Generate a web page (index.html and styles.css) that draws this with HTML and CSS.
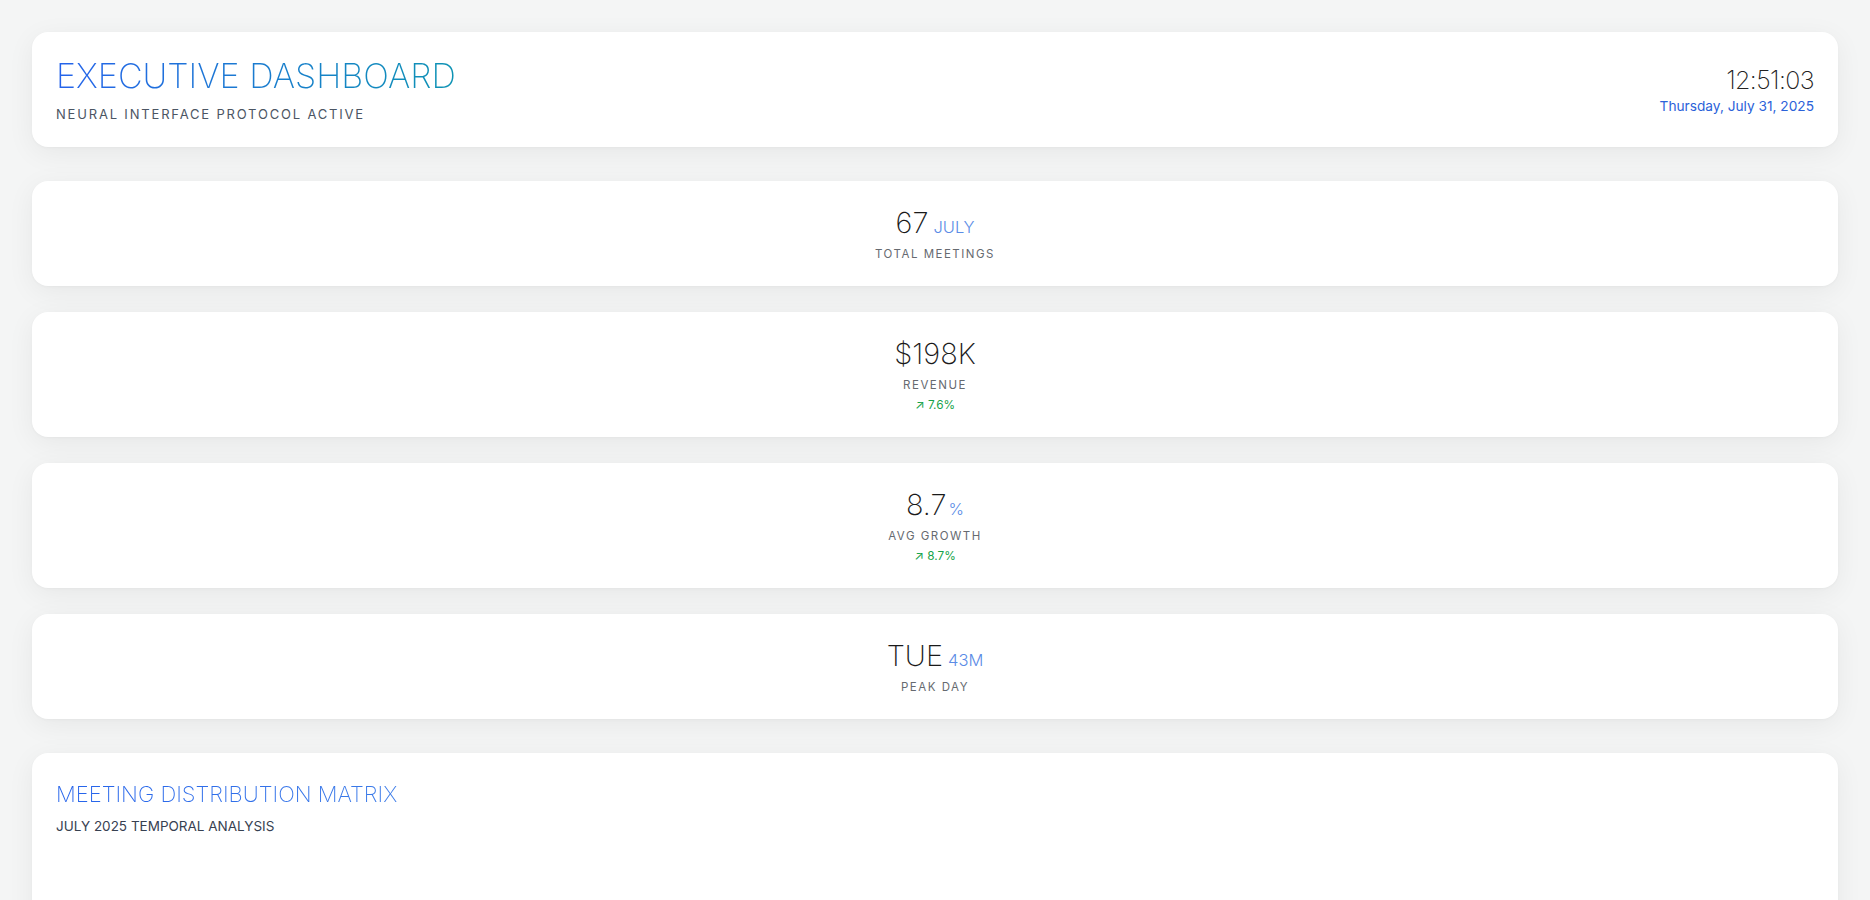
FILE: index.html
```html
<!DOCTYPE html>
<html lang="en">
<head>
<meta charset="utf-8">
<title>Executive Dashboard</title>
<link rel="stylesheet" href="styles.css">
</head>
<body>
<div class="page">
  <header class="card header">
    <div class="header-left">
      <h1 class="title">EXECUTIVE DASHBOARD</h1>
      <p class="subtitle">NEURAL INTERFACE PROTOCOL ACTIVE</p>
    </div>
    <div class="header-right">
      <div class="clock">12:51:03</div>
      <div class="date">Thursday, July 31, 2025</div>
    </div>
  </header>

  <section class="stats">
    <div class="card stat">
      <div class="stat-value">67<span class="unit">JULY</span></div>
      <div class="stat-label">TOTAL MEETINGS</div>
    </div>
    <div class="card stat">
      <div class="stat-value">$198K</div>
      <div class="stat-label">REVENUE</div>
      <div class="stat-change"><span class="arrow">↗</span> 7.6%</div>
    </div>
    <div class="card stat">
      <div class="stat-value">8.7<span class="unit unit-tight">%</span></div>
      <div class="stat-label">AVG GROWTH</div>
      <div class="stat-change"><span class="arrow">↗</span> 8.7%</div>
    </div>
    <div class="card stat">
      <div class="stat-value">TUE<span class="unit">43M</span></div>
      <div class="stat-label">PEAK DAY</div>
    </div>
  </section>

  <section class="card matrix">
    <h2 class="matrix-title">MEETING DISTRIBUTION MATRIX</h2>
    <p class="matrix-sub">JULY 2025 TEMPORAL ANALYSIS</p>
    <div class="matrix-body"></div>
  </section>
</div>
</body>
</html>
```

FILE: styles.css
```css
* { box-sizing: border-box; }
html, body { margin: 0; padding: 0; }
body {
  font-family: "Inter", "Noto Sans", "Liberation Sans", sans-serif;
  background: #f4f5f5;
  color: #1f2937;
}
.page {
  padding: 32px;
  display: flex;
  flex-direction: column;
}
.card {
  background: #ffffff;
  border-radius: 16px;
  box-shadow: 0 6px 28px rgba(0, 0, 0, 0.06), 0 1px 3px rgba(0, 0, 0, 0.03);
}
.header {
  display: flex;
  justify-content: space-between;
  align-items: center;
  padding: 24px 24px 25px;
  margin-bottom: 34px;
}
.title {
  margin: 0;
  font-size: 34px;
  font-weight: 200;
  line-height: 1.2;
  background: linear-gradient(90deg, #2563eb, #0e93b4);
  -webkit-background-clip: text;
  background-clip: text;
  color: transparent;
  display: inline-block;
}
.subtitle {
  margin: 10px 0 0;
  font-size: 13px;
  letter-spacing: 0.14em;
  color: #4b5563;
  line-height: 1.2;
}
.header-right { text-align: right; }
.clock {
  font-size: 25px;
  font-weight: 200;
  color: #222;
  line-height: 1.2;
  letter-spacing: -0.6px;
}
.date {
  font-size: 13.7px;
  color: #2b62d9;
  margin-top: 3px;
}
.stats {
  display: flex;
  flex-direction: column;
  gap: 26px;
  margin-bottom: 34px;
}
.stat {
  padding: 25px 24px 25px;
  text-align: center;
}
.stat-value {
  font-size: 29px;
  font-weight: 200;
  color: #1a1a1a;
  line-height: 1.18;
}
.unit {
  font-size: 16.5px;
  font-weight: 300;
  color: #5b8ce6;
  margin-left: 5px;
}
.unit-tight { margin-left: 2px; }
.stat-label {
  margin-top: 7px;
  font-size: 11.5px;
  letter-spacing: 0.13em;
  color: #666a70;
  line-height: 1.2;
}
.stat-change {
  margin-top: 6px;
  font-size: 11.8px;
  color: #16a34a;
  line-height: 14px;
  height: 14px;
}
.arrow { font-size: 12.5px; line-height: 1; }
.matrix {
  padding: 28px 24px;
  min-height: 400px;
}
.matrix-title {
  margin: 0;
  font-size: 22px;
  font-weight: 200;
  line-height: 1.2;
  background: linear-gradient(90deg, #2563eb, #3b7be8);
  -webkit-background-clip: text;
  background-clip: text;
  color: transparent;
  display: inline-block;
}
.matrix-sub {
  margin: 10px 0 0;
  font-size: 13.5px;
  color: #374151;
  line-height: 1.2;
}
```
